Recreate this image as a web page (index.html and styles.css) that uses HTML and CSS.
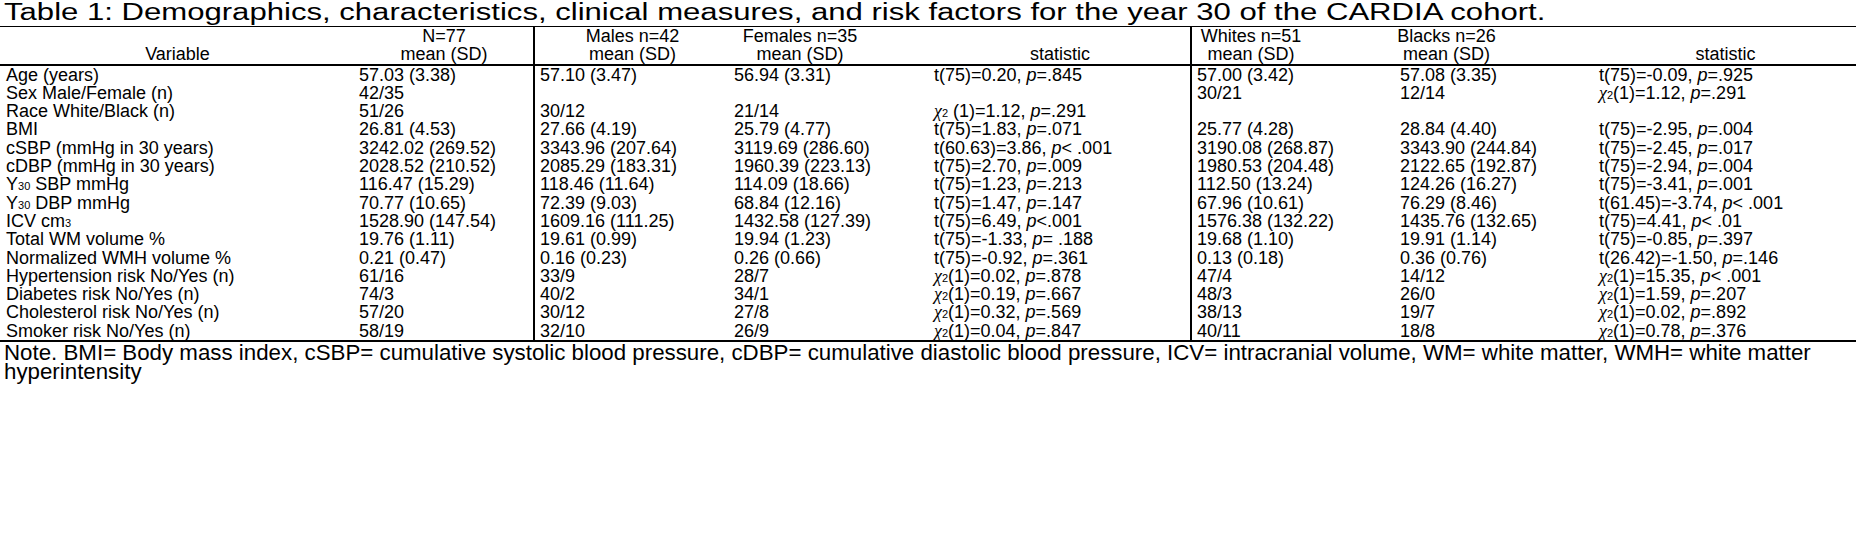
FILE: index.html
```html
<!DOCTYPE html>
<html>
<head>
<meta charset="utf-8">
<link rel="stylesheet" href="styles.css">
</head>
<body>
<div class="page">
  <h1 class="title"><span class="title-text">Table 1: Demographics, characteristics, clinical measures, and risk factors for the year 30 of the CARDIA cohort.</span></h1>
  <table class="tbl">
    <colgroup>
      <col class="c1"><col class="c2"><col class="c3"><col class="c4"><col class="c5"><col class="c6"><col class="c7"><col class="c8">
    </colgroup>
    <thead>
      <tr class="hr1">
        <th></th><th>N=77</th><th class="vl">Males n=42</th><th class="hf">Females n=35</th><th></th><th class="vl hw">Whites n=51</th><th class="hb">Blacks n=26</th><th></th>
      </tr>
      <tr class="hr2">
        <th>Variable</th><th>mean (SD)</th><th class="vl">mean (SD)</th><th class="hf">mean (SD)</th><th>statistic</th><th class="vl hw">mean (SD)</th><th class="hb">mean (SD)</th><th>statistic</th>
      </tr>
    </thead>
    <tbody>
      <tr><td>Age (years)</td><td>57.03 (3.38)</td><td class="vl">57.10 (3.47)</td><td>56.94 (3.31)</td><td>t(75)=0.20, <i>p</i>=.845</td><td class="vl">57.00 (3.42)</td><td>57.08 (3.35)</td><td>t(75)=-0.09, <i>p</i>=.925</td></tr>
      <tr><td>Sex Male/Female (n)</td><td>42/35</td><td class="vl"></td><td></td><td></td><td class="vl">30/21</td><td>12/14</td><td><span class="chi">χ</span><span class="sm">2</span>(1)=1.12, <i>p</i>=.291</td></tr>
      <tr><td>Race White/Black (n)</td><td>51/26</td><td class="vl">30/12</td><td>21/14</td><td><span class="chi">χ</span><span class="sm">2</span> (1)=1.12, <i>p</i>=.291</td><td class="vl"></td><td></td><td></td></tr>
      <tr><td>BMI</td><td>26.81 (4.53)</td><td class="vl">27.66 (4.19)</td><td>25.79 (4.77)</td><td>t(75)=1.83, <i>p</i>=.071</td><td class="vl">25.77 (4.28)</td><td>28.84 (4.40)</td><td>t(75)=-2.95, <i>p</i>=.004</td></tr>
      <tr><td>cSBP (mmHg in 30 years)</td><td>3242.02 (269.52)</td><td class="vl">3343.96 (207.64)</td><td>3119.69 (286.60)</td><td>t(60.63)=3.86, <i>p</i>&lt; .001</td><td class="vl">3190.08 (268.87)</td><td>3343.90 (244.84)</td><td>t(75)=-2.45, <i>p</i>=.017</td></tr>
      <tr><td>cDBP (mmHg in 30 years)</td><td>2028.52 (210.52)</td><td class="vl">2085.29 (183.31)</td><td>1960.39 (223.13)</td><td>t(75)=2.70, <i>p</i>=.009</td><td class="vl">1980.53 (204.48)</td><td>2122.65 (192.87)</td><td>t(75)=-2.94, <i>p</i>=.004</td></tr>
      <tr><td>Y<span class="sm">30</span> SBP mmHg</td><td>116.47 (15.29)</td><td class="vl">118.46 (11.64)</td><td>114.09 (18.66)</td><td>t(75)=1.23, <i>p</i>=.213</td><td class="vl">112.50 (13.24)</td><td>124.26 (16.27)</td><td>t(75)=-3.41, <i>p</i>=.001</td></tr>
      <tr><td>Y<span class="sm">30</span> DBP mmHg</td><td>70.77 (10.65)</td><td class="vl">72.39 (9.03)</td><td>68.84 (12.16)</td><td>t(75)=1.47, <i>p</i>=.147</td><td class="vl">67.96 (10.61)</td><td>76.29 (8.46)</td><td>t(61.45)=-3.74, <i>p</i>&lt; .001</td></tr>
      <tr><td>ICV cm<span class="sm">3</span></td><td>1528.90 (147.54)</td><td class="vl">1609.16 (111.25)</td><td>1432.58 (127.39)</td><td>t(75)=6.49, <i>p</i>&lt;.001</td><td class="vl">1576.38 (132.22)</td><td>1435.76 (132.65)</td><td>t(75)=4.41, <i>p</i>&lt; .01</td></tr>
      <tr><td>Total WM volume %</td><td>19.76 (1.11)</td><td class="vl">19.61 (0.99)</td><td>19.94 (1.23)</td><td>t(75)=-1.33, <i>p</i>= .188</td><td class="vl">19.68 (1.10)</td><td>19.91 (1.14)</td><td>t(75)=-0.85, <i>p</i>=.397</td></tr>
      <tr><td>Normalized WMH volume %</td><td>0.21 (0.47)</td><td class="vl">0.16 (0.23)</td><td>0.26 (0.66)</td><td>t(75)=-0.92, <i>p</i>=.361</td><td class="vl">0.13 (0.18)</td><td>0.36 (0.76)</td><td>t(26.42)=-1.50, <i>p</i>=.146</td></tr>
      <tr><td>Hypertension risk No/Yes (n)</td><td>61/16</td><td class="vl">33/9</td><td>28/7</td><td><span class="chi">χ</span><span class="sm">2</span>(1)=0.02, <i>p</i>=.878</td><td class="vl">47/4</td><td>14/12</td><td><span class="chi">χ</span><span class="sm">2</span>(1)=15.35, <i>p</i>&lt; .001</td></tr>
      <tr><td>Diabetes risk No/Yes (n)</td><td>74/3</td><td class="vl">40/2</td><td>34/1</td><td><span class="chi">χ</span><span class="sm">2</span>(1)=0.19, <i>p</i>=.667</td><td class="vl">48/3</td><td>26/0</td><td><span class="chi">χ</span><span class="sm">2</span>(1)=1.59, <i>p</i>=.207</td></tr>
      <tr><td>Cholesterol risk No/Yes (n)</td><td>57/20</td><td class="vl">30/12</td><td>27/8</td><td><span class="chi">χ</span><span class="sm">2</span>(1)=0.32, <i>p</i>=.569</td><td class="vl">38/13</td><td>19/7</td><td><span class="chi">χ</span><span class="sm">2</span>(1)=0.02, <i>p</i>=.892</td></tr>
      <tr><td>Smoker risk No/Yes (n)</td><td>58/19</td><td class="vl">32/10</td><td>26/9</td><td><span class="chi">χ</span><span class="sm">2</span>(1)=0.04, <i>p</i>=.847</td><td class="vl">40/11</td><td>18/8</td><td><span class="chi">χ</span><span class="sm">2</span>(1)=0.78, <i>p</i>=.376</td></tr>
    </tbody>
  </table>
  <p class="note">Note. BMI= Body mass index, cSBP= cumulative systolic blood pressure, cDBP= cumulative diastolic blood pressure, ICV= intracranial volume, WM= white matter, WMH= white matter hyperintensity</p>
</div>
</body>
</html>
```
FILE: styles.css
```css
html, body {
  margin: 0;
  padding: 0;
  background: #ffffff;
}
body {
  font-family: "Liberation Sans", Arial, sans-serif;
  color: #000000;
  width: 1856px;
  height: 546px;
  overflow: hidden;
}
.page {
  display: flex;
  flex-direction: column;
}
.title {
  margin: 0;
  padding: 0 0 1px 4px;
  font-size: 23.5px;
  font-weight: normal;
  line-height: 25px;
  white-space: nowrap;
}
.title-text {
  display: inline-block;
  transform: scaleX(1.323);
  transform-origin: 0 0;
}
.tbl {
  width: 1856px;
  border-collapse: collapse;
  table-layout: fixed;
  border-top: 1px solid #000;
  border-bottom: 2px solid #000;
  font-size: 18px;
  line-height: 18.3px;
}
.c1 { width: 355px; }
.c2 { width: 179px; }
.c3 { width: 196px; }
.c4 { width: 200px; }
.c5 { width: 261px; }
.c6 { width: 205px; }
.c7 { width: 199px; }
.c8 { width: 261px; }
.tbl th {
  font-weight: normal;
  text-align: center;
  padding: 0;
  white-space: nowrap;
}
.tbl .hr2 th {
  border-bottom: 2px solid #000;
}
.tbl td {
  padding: 0 0 0 4px;
  text-align: left;
  white-space: nowrap;
}
.tbl td:first-child {
  padding-left: 6px;
}
.tbl .vl {
  border-left: 2px solid #000;
}
.tbl td.vl {
  padding-left: 5px;
}
.tbl th.hf {
  padding-right: 60px;
}
.tbl th.hw {
  padding-right: 86px;
}
.tbl th.hb {
  padding-right: 98px;
}
.sm {
  font-size: 11px;
  line-height: 0;
}
.chi {
  font-family: "Liberation Serif", serif;
  font-style: italic;
  font-size: 18px;
  line-height: 0;
}
.note {
  margin: 1px 0 0 0;
  padding-left: 4px;
  font-size: 22.3px;
  line-height: 19px;
}
```
